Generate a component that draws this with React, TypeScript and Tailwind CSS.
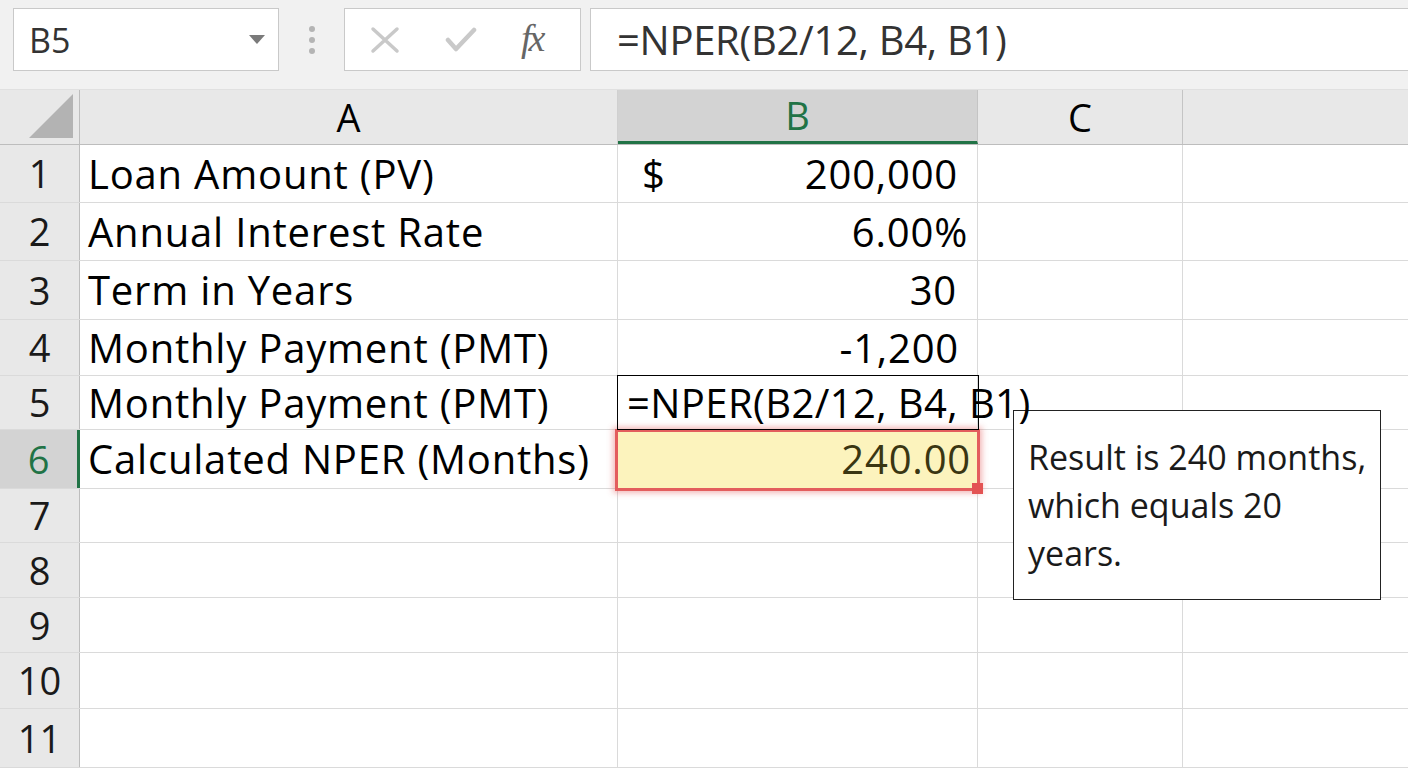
import React from "react";

const CELL = "font-['Open_Sans',sans-serif]";
const UI = "font-['Open_Sans',sans-serif]";

type Row = { n: number; h: string; a?: string; b?: React.ReactNode; kind?: "edit" | "result" };

const ROWS: Row[] = [
  {
    n: 1,
    h: "h-[58px]",
    a: "Loan Amount (PV)",
    b: (
      <div className="flex w-full justify-between pl-[24px] pr-[19px]">
        <span>$</span>
        <span>200,000</span>
      </div>
    ),
  },
  { n: 2, h: "h-[58px]", a: "Annual Interest Rate", b: <div className="w-full text-right pr-[9px]">6.00%</div> },
  { n: 3, h: "h-[59px]", a: "Term in Years", b: <div className="w-full text-right pr-[20px]">30</div> },
  { n: 4, h: "h-[56px]", a: "Monthly Payment (PMT)", b: <div className="w-full text-right pr-[18px]">-1,200</div> },
  { n: 5, h: "h-[54px]", a: "Monthly Payment (PMT)", kind: "edit" },
  { n: 6, h: "h-[59px]", a: "Calculated NPER (Months)", kind: "result" },
  { n: 7, h: "h-[54px]" },
  { n: 8, h: "h-[55px]" },
  { n: 9, h: "h-[55px]" },
  { n: 10, h: "h-[56px]" },
  { n: 11, h: "h-[59px]" },
];

function FormulaBar() {
  return (
    <div className="h-[90px] bg-[#f1f1f1] flex items-start pt-[8px] pl-[13px] border-b border-[#e0e0e0]">
      {/* name box */}
      <div className="w-[266px] h-[63px] bg-white border border-[#c9c9c9] flex items-center justify-between pl-[15px] pr-[13px]">
        <span className={`${UI} text-[34px] text-[#333] leading-none`}>B5</span>
        <svg width="16" height="9" viewBox="0 0 16 9">
          <path d="M0 0 L16 0 L8 9 Z" fill="#7a7a7a" />
        </svg>
      </div>
      {/* grip dots */}
      <div className="w-[65px] h-[63px] flex flex-col items-center justify-center gap-[5px]">
        <span className="w-[6px] h-[6px] rounded-full bg-[#b4b4b4]" />
        <span className="w-[6px] h-[6px] rounded-full bg-[#b4b4b4]" />
        <span className="w-[6px] h-[6px] rounded-full bg-[#b4b4b4]" />
      </div>
      {/* cancel / enter / fx */}
      <div className="w-[237px] h-[63px] bg-white border border-[#c9c9c9] flex items-center pl-[25px]">
        <svg width="30" height="28" viewBox="0 0 30 28">
          <path d="M3 3 L27 25 M27 3 L3 25" stroke="#c9c9c9" strokeWidth="3.5" strokeLinecap="round" />
        </svg>
        <svg className="ml-[45px]" width="32" height="28" viewBox="0 0 32 28">
          <path d="M3 14 L11 23 L29 4" stroke="#c9c9c9" strokeWidth="4.5" fill="none" strokeLinecap="round" strokeLinejoin="round" />
        </svg>
        <span className="ml-[44px] font-['Liberation_Serif',serif] italic text-[38px] text-[#666] leading-none tracking-[-3px] pb-[4px]">
          fx
        </span>
      </div>
      {/* formula */}
      <div className="ml-[9px] flex-1 h-[63px] bg-white border border-[#c9c9c9] border-r-0 flex items-center pl-[26px]">
        <span className={`${UI} text-[40px] text-[#333] leading-none tracking-[-0.3px]`}>=NPER(B2/12, B4, B1)</span>
      </div>
    </div>
  );
}

function HeaderRow() {
  return (
    <div className={`${CELL} flex h-[55px] bg-[#e8e8e8] border-b border-[#bdbdbd] text-[38px] text-black`}>
      <div className="w-[80px] border-r border-[#bdbdbd] flex items-end justify-end pr-[6px] pb-[6px]">
        <svg width="44" height="44" viewBox="0 0 44 44">
          <path d="M44 0 L44 44 L0 44 Z" fill="#b3b3b3" />
        </svg>
      </div>
      <div className="w-[538px] border-r border-[#d0d0d0] flex items-center justify-center">A</div>
      <div className="w-[360px] bg-[#d3d3d3] border-r border-[#c4c4c4] border-b-[3px] border-b-[#217346] flex items-center justify-center text-[#217346]">
        B
      </div>
      <div className="w-[205px] border-r border-[#c4c4c4] flex items-center justify-center">C</div>
      <div className="flex-1" />
    </div>
  );
}

function BCell({ row }: { row: Row }) {
  if (row.kind === "edit") {
    return (
      <div className="relative w-[360px] h-full border-r border-[#dadada] flex items-center z-30">
        <div className="absolute -left-px -top-px -right-[2px] -bottom-px border-[1.5px] border-black" />
        <span className="pl-[9px] whitespace-nowrap tracking-[0.4px]">=NPER(B2/12, B4, B1)</span>
      </div>
    );
  }
  if (row.kind === "result") {
    return (
      <div className="relative w-[360px] h-full border-r border-[#dadada] flex items-center bg-[#fcf3bd]">
        <div className="absolute -left-[3px] -top-[1px] -right-[3px] -bottom-[3px] border-[3px] border-[#e35d5d] shadow-[0_0_6px_2px_rgba(227,93,93,0.45)]" />
        <div className="absolute -right-[6px] -bottom-[6px] w-[11px] h-[11px] bg-[#e35353]" />
        <div className="w-full text-right pr-[6px] text-[#3a3612]">240.00</div>
      </div>
    );
  }
  return <div className="w-[360px] h-full border-r border-[#dadada] flex items-center">{row.b}</div>;
}

export default function App() {
  return (
    <div className="relative w-[1408px] h-[768px] overflow-hidden bg-white">
      <FormulaBar />
      <HeaderRow />
      <div className={`${CELL} text-[40px] tracking-[0.8px] text-black`}>
        {ROWS.map((r) => {
          const sel = r.n === 6;
          return (
            <div key={r.n} className={`flex ${r.h} border-b border-[#dadada]`}>
              <div
                className={
                  sel
                    ? "w-[80px] bg-[#d3d3d3] border-r-[3px] border-[#217346] flex items-center justify-center text-[#217346] text-[38px] tracking-normal"
                    : "w-[80px] bg-[#e8e8e8] border-r border-[#bdbdbd] flex items-center justify-center text-[#1a1a1a] text-[38px] tracking-normal"
                }
              >
                {r.n}
              </div>
              <div className="w-[538px] h-full border-r border-[#dadada] flex items-center pl-[8px] whitespace-nowrap">{r.a}</div>
              <BCell row={r} />
              <div className="w-[205px] h-full border-r border-[#dadada]" />
              <div className="flex-1" />
            </div>
          );
        })}
      </div>

      {/* comment box over the grid */}
      <div className="absolute left-[1013px] top-[410px] w-[368px] h-[190px] bg-white border-[1.5px] border-[#222] z-20 pl-[14px] pt-[22px]">
        <p className={`${UI} text-[34px] leading-[48px] text-[#1a1a1a] tracking-normal`}>
          Result is 240 months,
          <br />
          which equals 20
          <br />
          years.
        </p>
      </div>
    </div>
  );
}
